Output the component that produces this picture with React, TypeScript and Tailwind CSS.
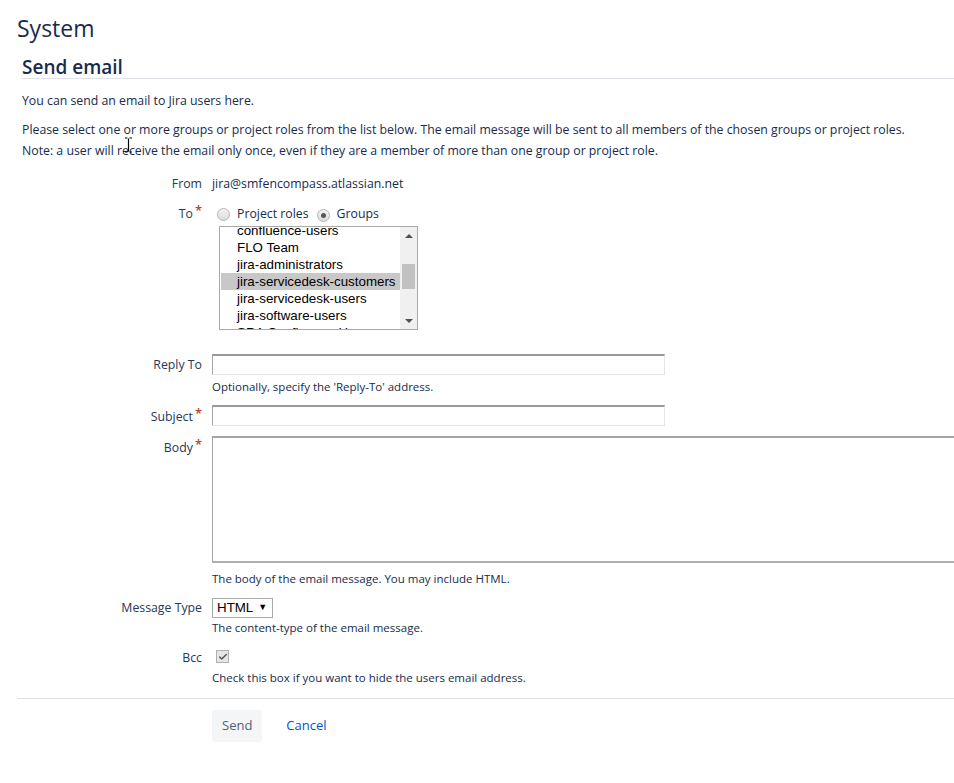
import { Check } from "lucide-react";

const groups = [
  "confluence-users",
  "FLO Team",
  "jira-administrators",
  "jira-servicedesk-customers",
  "jira-servicedesk-users",
  "jira-software-users",
  "SRA Confluence Users",
];

function Req() {
  return <span className="ml-[2px] relative -top-[3px] text-[#c1432a] text-[13px] font-semibold">*</span>;
}

function Label({ children, req }: { children: string; req?: boolean }) {
  return (
    <div className="w-[180px] shrink-0 text-right text-[12.3px] text-[#253858]">
      {children}
      {req && <Req />}
    </div>
  );
}

function Radio({ checked }: { checked?: boolean }) {
  return (
    <span className="inline-flex items-center justify-center w-[13px] h-[13px] rounded-full border border-[#b5b5b5] bg-gradient-to-b from-[#f2f2f2] to-[#dcdcdc]">
      {checked && <span className="w-[5px] h-[5px] rounded-full bg-[#555]" />}
    </span>
  );
}

function TextInput() {
  return (
    <div className="w-[453px] h-[21px] border border-[#e6e6e6] border-t-2 border-t-[#9a9a9a] border-l-[#a5a5a5] bg-white" />
  );
}

function Hint({ children, gap = "mt-[3px]" }: { children: string; gap?: string }) {
  return <div className={`text-[11.5px] text-[#172b4d] ${gap}`}>{children}</div>;
}

// scrolled multi-select list of groups
function GroupList() {
  return (
    <div className="w-[199px] h-[104px] border border-[#a9a9a9] flex overflow-hidden bg-white font-['Liberation_Sans',Arial,sans-serif]">
      <div className="flex-1 overflow-hidden">
        <div className="-mt-[5px] pl-[1px]">
          {groups.map((g, i) => (
            <div
              key={g}
              className={`h-[17px] leading-[17px] pl-[16px] text-[13.33px] text-black ${i === 3 ? "bg-[#c8c8c8]" : ""}`}
            >
              {g}
            </div>
          ))}
        </div>
      </div>
      <div className="w-[17px] bg-[#f0f0f0] flex flex-col items-center">
        <div className="h-[17px] flex items-center justify-center">
          <span className="w-0 h-0 border-l-[4px] border-r-[4px] border-b-[4px] border-l-transparent border-r-transparent border-b-[#505050]" />
        </div>
        <div className="mt-[20px] w-[13px] h-[25px] bg-[#c1c1c1]" />
        <div className="flex-1" />
        <div className="h-[17px] flex items-center justify-center">
          <span className="w-0 h-0 border-l-[4px] border-r-[4px] border-t-[4px] border-l-transparent border-r-transparent border-t-[#505050]" />
        </div>
      </div>
    </div>
  );
}

export default function App() {
  return (
    <div className="w-[954px] h-[783px] overflow-hidden bg-white text-[#172b4d] relative font-['Open_Sans','Noto_Sans',sans-serif]">
      <div className="pl-[17px] pt-[12px]">
        <h1 className="text-[23px] leading-[32px] font-medium text-[#172b4d]">System</h1>
      </div>
      <div className="pl-[22px] mt-[12px]">
        <h2 className="text-[19px] leading-[21px] pt-[1px] font-semibold border-b border-[#dfe1e6]">Send email</h2>
        <p className="text-[12.3px] mt-[12px] leading-[20px]">You can send an email to Jira users here.</p>
        <p className="text-[12.3px] mt-[8px] leading-[21px]">
          Please select one or more groups or project roles from the list below. The email message will be sent to all members of the chosen groups or project roles.
          <br />
          Note: a user will receive the email only once, even if they are a member of more than one group or project role.
        </p>

        <div className="mt-[13px] flex gap-[10px] items-center h-[20px]">
          <Label>From</Label>
          <div className="text-[12.3px]">jira@smfencompass.atlassian.net</div>
        </div>

        <div className="mt-[10px] flex gap-[10px]">
          <Label req>To</Label>
          <div>
            <div className="flex items-center h-[20px] text-[12.3px] pl-[5px]">
              <Radio />
              <span className="ml-[7px]">Project roles</span>
              <span className="ml-[8px]"><Radio checked /></span>
              <span className="ml-[7px]">Groups</span>
            </div>
            <div className="ml-[7px] mt-[2px]">
              <GroupList />
            </div>
          </div>
        </div>

        <div className="mt-[24px] flex gap-[10px]">
          <div className="pt-[2px] flex"><Label>Reply To</Label></div>
          <div>
            <TextInput />
            <Hint>Optionally, specify the 'Reply-To' address.</Hint>
          </div>
        </div>

        <div className="mt-[10px] flex gap-[10px]">
          <div className="pt-[2px] flex"><Label req>Subject</Label></div>
          <TextInput />
        </div>

        <div className="mt-[9px] flex gap-[10px]">
          <div className="pt-[2px] flex"><Label req>Body</Label></div>
          <div>
            <div className="w-[760px] h-[127px] border-y-2 border-l border-[#a5a5a5] border-b-[#b0b0b0]" />
            <Hint gap="mt-[7px]">The body of the email message. You may include HTML.</Hint>
          </div>
        </div>

        <div className="mt-[11px] flex gap-[10px]">
          <div className="pt-[1px] flex"><Label>Message Type</Label></div>
          <div>
            <div className="w-[61px] h-[20px] border border-[#a9a9a9] flex items-center pl-[4px] text-[13.33px] text-black font-['Liberation_Sans',Arial,sans-serif]">
              HTML <span className="ml-[5px] text-[9px]">▼</span>
            </div>
            <Hint gap="mt-[1px]">The content-type of the email message.</Hint>
          </div>
        </div>

        <div className="mt-[12px] flex gap-[10px]">
          <div className="pt-[1px] flex"><Label>Bcc</Label></div>
          <div>
            <div className="ml-[4px] mt-[2px] w-[13px] h-[13px] border border-[#b0b0b0] bg-[#e6e6e6] flex items-center justify-center">
              <Check size={10} strokeWidth={3.5} className="text-[#555]" />
            </div>
            <Hint gap="mt-[6px]">Check this box if you want to hide the users email address.</Hint>
          </div>
        </div>
      </div>

      <div className="ml-[17px] mt-[11px] border-t border-[#dfe1e6]" />

      <div className="pl-[212px] mt-[11px] flex items-center gap-[24px]">
        <button className="h-[32px] px-[10px] rounded-[3px] bg-[#f4f5f7] text-[#505f79] text-[13px]">Send</button>
        <span className="text-[13px] text-[#0052cc]">Cancel</span>
      </div>

      {/* text cursor captured in the screenshot */}
      <div className="absolute left-[124px] top-[137px] pointer-events-none">
        <svg width="9" height="16" viewBox="0 0 9 16">
          <path d="M1 1h2.5M5.5 1H8M4.5 1.5v13M1 15h2.5M5.5 15H8" stroke="#000" strokeWidth="1.2" fill="none" />
        </svg>
      </div>
    </div>
  );
}
